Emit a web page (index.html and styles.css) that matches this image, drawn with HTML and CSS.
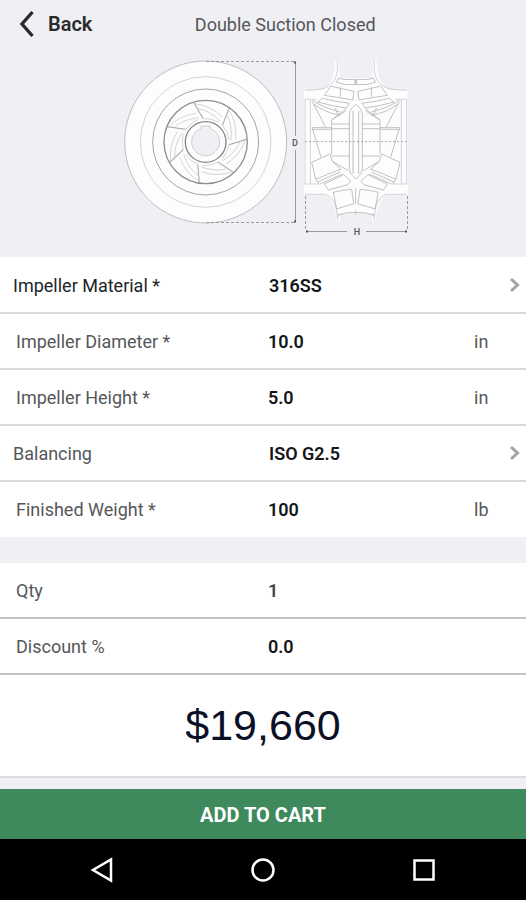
FILE: index.html
```html
<!DOCTYPE html>
<html lang="en">
<head>
    <meta charset="UTF-8">
    <meta name="viewport" content="width=device-width, initial-scale=1.0">
    <title>Double Suction Closed</title>
    <link rel="stylesheet" href="styles.css">
</head>
<body>

<header class="header">
    <button type="button" class="back">
        <svg width="16" height="28" viewBox="0 0 16 28" fill="none" stroke="#2b2b2e" stroke-width="3.4"><path d="M14.500 2 4 14l10.500 12"/></svg>
        Back
    </button>
    <h1 class="title">Double Suction Closed</h1>
</header>

<div class="figure">
    <svg class="drawing" viewBox="120 56 292 184" fill="none" stroke="#b4b4b8">
        <defs>
            <g id="blade">
                <path stroke="#a2a2a5" stroke-width="3" d="M156 230 212 238"/>
                <path stroke="#cfcfd2" stroke-width="2.500" d="M162 230Q195 196 244 190M176 234Q204 208 250 203M212 238Q228 218 250 208"/>
            </g>
            <g id="half">
                <path stroke="#cbcbcf" d="M157 30V62Q154 94 130 108 118 120 60 121M60 148H95M60 148V402H102M76 148V402M60 433H122Q150 445 154 480L158 512"/>
                <path d="M160 84Q170 90 210 88V104Q176 106 154 97ZM138 108Q166 116 207 124L203 150Q160 142 118 136ZM166 112V140"/>
                <path d="M112 145Q150 155 194 160L184 174Q140 168 98 156ZM82 150Q110 172 166 186M86 162Q120 188 166 196M150 174 160 194M82 155 122 232M184 176 140 210"/>
                <path d="M212 164Q193 176 193 195V358Q194 374 212 387M204 182V372M140 210V312M140 210 184 182M140 222H193M140 236H193M140 318H193"/>
                <path d="M80 233H140M80 238H140M82 235 108 322M80 337 135 312 142 334 168 358 150 364 92 388ZM142 334 190 362M98 396 165 366M106 402 172 372M92 388 102 402M118 402 176 374 198 394 188 404 130 420Z"/>
                <path d="M145 427Q170 420 200 418L206 462Q180 468 155 477ZM160 496Q180 486 212 487M160 490V500"/>
            </g>
        </defs>

        <!-- front view -->
        <g transform="translate(115 50) scale(.3333)" stroke-width="3">
            <circle cx="272" cy="276" r="243" fill="#fdfdfe" stroke="#bdbdc0"/>
            <circle cx="272" cy="276" r="196" stroke="#d3d3d6"/>
            <circle cx="272" cy="276" r="159" stroke="#a5a5a8"/>
            <circle cx="272" cy="276" r="125" stroke="#8e8e91" stroke-width="4"/>
            <use href="#blade"/>
            <use href="#blade" transform="rotate(51.43 272 276)"/>
            <use href="#blade" transform="rotate(102.86 272 276)"/>
            <use href="#blade" transform="rotate(154.29 272 276)"/>
            <use href="#blade" transform="rotate(205.71 272 276)"/>
            <use href="#blade" transform="rotate(257.14 272 276)"/>
            <use href="#blade" transform="rotate(308.57 272 276)"/>
            <circle cx="272" cy="276" r="61" fill="#fdfdfe" stroke="#858588" stroke-width="4"/>
            <path d="M258 236V228H286V236A42 42 0 1 1 258 236Z" fill="#f0eff4" stroke="#cfcfd3"/>
        </g>

        <!-- section view -->
        <g transform="translate(285 50) scale(.3333)" stroke-width="2.500">
            <path fill="#fdfdfe" stroke="none" d="M150 30H160L165 84H260L265 30H275Q276 104 312 120H368V435H305Q280 445 270 515H260V490H165V515H155Q148 445 120 435H57V120H112Q149 104 150 30Z"/>
            <use href="#half"/>
            <use href="#half" transform="matrix(-1 0 0 1 425 0)"/>
            <path d="M212 88V104M212 415V462M212 482V494"/>
            <path stroke="#a2a2a5" stroke-dasharray="7 5" d="M60 275H365"/>
        </g>

        <!-- dimension lines -->
        <g stroke="#9b9b9e">
            <path stroke-dasharray="3 2" d="M206 61.500H295M206 222.500H295M305.500 196V231M407.500 196V231"/>
            <path d="M295.500 62V136M295.500 150V222M306 231.500H347M366 231.500H407"/>
            <path stroke="#555" stroke-width="2" d="M294 62.500h2M294 221.500h2M306 231.500h2M405 231.500h2"/>
        </g>
        <text class="dim" x="295" y="146">D</text>
        <text class="dim" x="357" y="235">H</text>
    </svg>
</div>

<form>
    <div class="list specs">
        <button type="button" class="row row-link">
            <span class="label dark">Impeller Material *</span>
            <span class="value">316SS</span>
            <svg class="chevron" width="12" height="16" viewBox="0 0 12 16" fill="none" stroke="#a3a3a3" stroke-width="3"><path d="m2 2 6.500 6L2 14"/></svg>
        </button>
        <div class="row">
            <label class="label" for="diameter">Impeller Diameter *</label>
            <input class="value" type="text" id="diameter" value="10.0">
            <span class="unit">in</span>
        </div>
        <div class="row">
            <label class="label" for="height">Impeller Height *</label>
            <input class="value" type="text" id="height" value="5.0">
            <span class="unit">in</span>
        </div>
        <button type="button" class="row row-link">
            <span class="label">Balancing</span>
            <span class="value">ISO G2.5</span>
            <svg class="chevron" width="12" height="16" viewBox="0 0 12 16" fill="none" stroke="#a3a3a3" stroke-width="3"><path d="m2 2 6.500 6L2 14"/></svg>
        </button>
        <div class="row last">
            <label class="label" for="weight">Finished Weight *</label>
            <input class="value" type="text" id="weight" value="100">
            <span class="unit">lb</span>
        </div>
    </div>

    <div class="list totals">
        <div class="row">
            <label class="label" for="qty">Qty</label>
            <input class="value qty" type="text" id="qty" value="1">
        </div>
        <div class="row">
            <label class="label" for="discount">Discount %</label>
            <input class="value" type="text" id="discount" value="0.0">
        </div>
        <div class="price">$19,660</div>
    </div>

    <button type="button" class="add">ADD TO CART</button>
</form>

<nav class="navbar">
    <button type="button" aria-label="Back"><svg width="24" height="26" viewBox="0 0 24 26"><path d="M21 2.500V23.500L3 13Z"/></svg></button>
    <button type="button" aria-label="Home"><svg width="24" height="26" viewBox="0 0 24 26"><circle cx="12" cy="13" r="10.500"/></svg></button>
    <button type="button" aria-label="Recent apps"><svg width="24" height="26" viewBox="0 0 24 26"><rect x="2.500" y="3.500" width="19" height="19"/></svg></button>
</nav>

</body>
</html>
```

FILE: styles.css
```css
* {
    box-sizing: border-box;
}
body {
    margin: 0;
    min-height: 100vh;
    display: flex;
    flex-direction: column;
    font-family: Roboto, "Liberation Sans", sans-serif;
    font-size: 18px;
    color: #14171a;
    background-color: #efeff4;
}
button, input {
    font: inherit;
    color: inherit;
    border: 0;
    padding: 0;
    background: none;
}
.header {
    display: flex;
    align-items: center;
    height: 48px;
    padding: 0 48px 0 18px;
}
.back {
    display: flex;
    align-items: center;
    gap: 14px;
    font-size: 20px;
    font-weight: 600;
    color: #2b2b2e;
}
.title {
    flex: 1;
    margin: 0;
    text-align: center;
    font-size: 18px;
    font-weight: 400;
    color: #56565a;
}
.figure {
    padding: 8px 0 17px 6px;
}
.drawing {
    display: block;
    width: 292px;
    height: 184px;
    margin: 0 auto;
}
.dim {
    font-size: 9px;
    font-weight: 500;
    text-anchor: middle;
    fill: #555;
    stroke: none;
}
.list {
    background-color: #fff;
}
.specs {
    padding-top: 1px;
}
.row {
    display: flex;
    align-items: center;
    width: 100%;
    height: 56px;
    padding: 0 16px;
    border-bottom: 2px solid #d9dbdb;
    text-align: left;
}
.row-link {
    gap: 2px;
    padding: 0 5px 0 13px;
}
.label {
    width: 51%;
    flex: none;
    color: #555759;
}
.row-link .label {
    width: 50%;
}
.label.dark {
    color: #222426;
}
.row.last {
    height: 55px;
    border-bottom: 0;
}
.value {
    flex: 1;
    min-width: 0;
    font-weight: 600;
}
.qty {
    color: #444;
}
.unit {
    width: 36px;
    color: #555759;
}
.totals {
    margin-top: 26px;
    border-bottom: 2px solid #dcdcdf;
}
.totals .row {
    border-color: #c4c4c4;
}
.price {
    padding: 22px 0 23px;
    text-align: center;
    font-family: "Liberation Sans", Arial, sans-serif;
    font-size: 43px;
    line-height: 56px;
    color: #0b1026;
}
.add {
    display: block;
    width: 100%;
    height: 50px;
    padding-top: 2px;
    margin-top: 11px;
    font-size: 20px;
    font-weight: 700;
    color: #fff;
    background-color: #3e8a5d;
}
.navbar {
    flex: 1;
    display: flex;
    align-items: center;
    justify-content: space-around;
    padding: 0 22px;
    background-color: #000;
}
.navbar button {
    display: flex;
}
.navbar svg {
    fill: none;
    stroke: #fff;
    stroke-width: 2.5;
}
```
